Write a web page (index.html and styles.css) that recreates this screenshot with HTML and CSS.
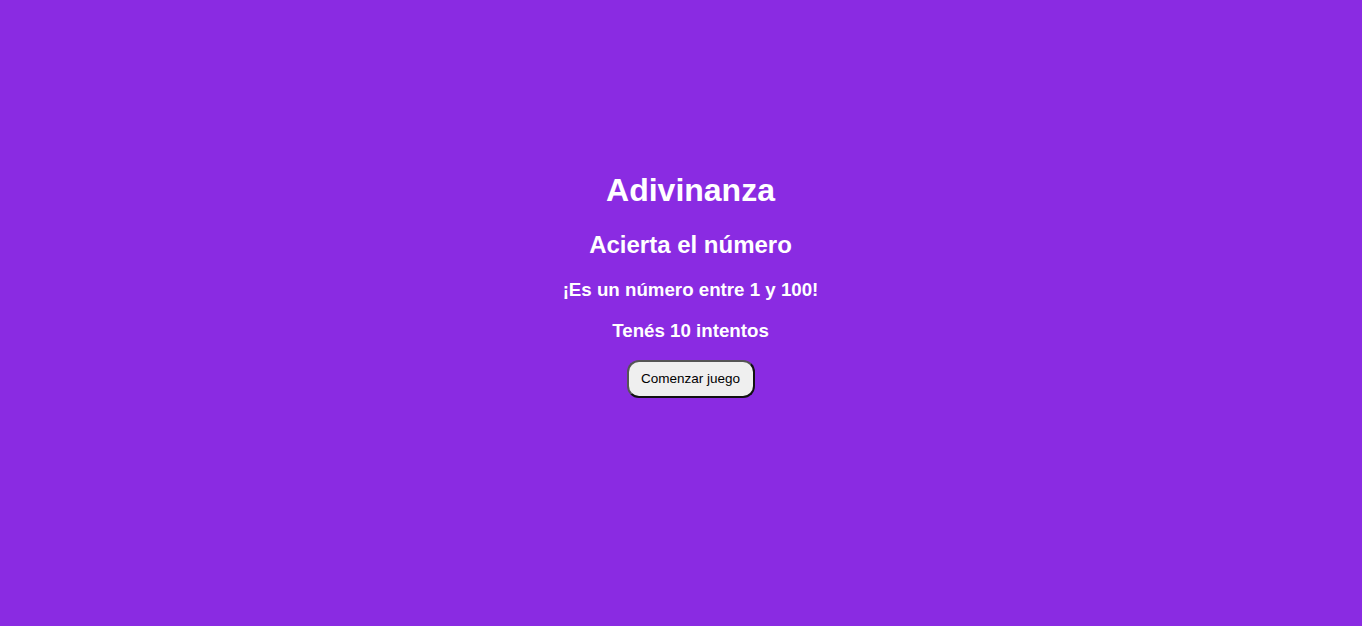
FILE: index.html
```html
<!DOCTYPE html>
<html lang="es">
<head>
<meta charset="utf-8">
<title>Adivinanza</title>
<link rel="stylesheet" href="styles.css">
</head>
<body>
<main class="game">
  <h1 class="title">Adivinanza</h1>
  <h2 class="subtitle">Acierta el número</h2>
  <h3 class="info">¡Es un número entre 1 y 100!</h3>
  <h3 class="info">Tenés 10 intentos</h3>
  <button class="start">Comenzar juego</button>
</main>
</body>
</html>
```

FILE: styles.css
```css
html, body {
  margin: 0;
  padding: 0;
}
body {
  background: #8a2be2;
  font-family: "Liberation Sans", Arial, sans-serif;
  color: #fff;
  min-height: 626px;
}
.game {
  text-align: center;
  padding-top: 151px;
  padding-left: 19px;
}
.title {
  font-size: 32px;
  margin: 21.44px 0;
}
.subtitle {
  font-size: 24px;
  margin: 19.92px 0;
}
.info {
  font-size: 18.72px;
  margin: 18.72px 0 18px;
}
.start {
  font-family: "Liberation Sans", Arial, sans-serif;
  font-size: 13.5px;
  color: #000;
  background: #efefef;
  border: 2px solid;
  border-color: #555 #111 #111 #555;
  border-radius: 12px;
  padding: 0 10px;
  height: 38px;
  min-width: 128px;
  white-space: nowrap;
  cursor: pointer;
}
```
